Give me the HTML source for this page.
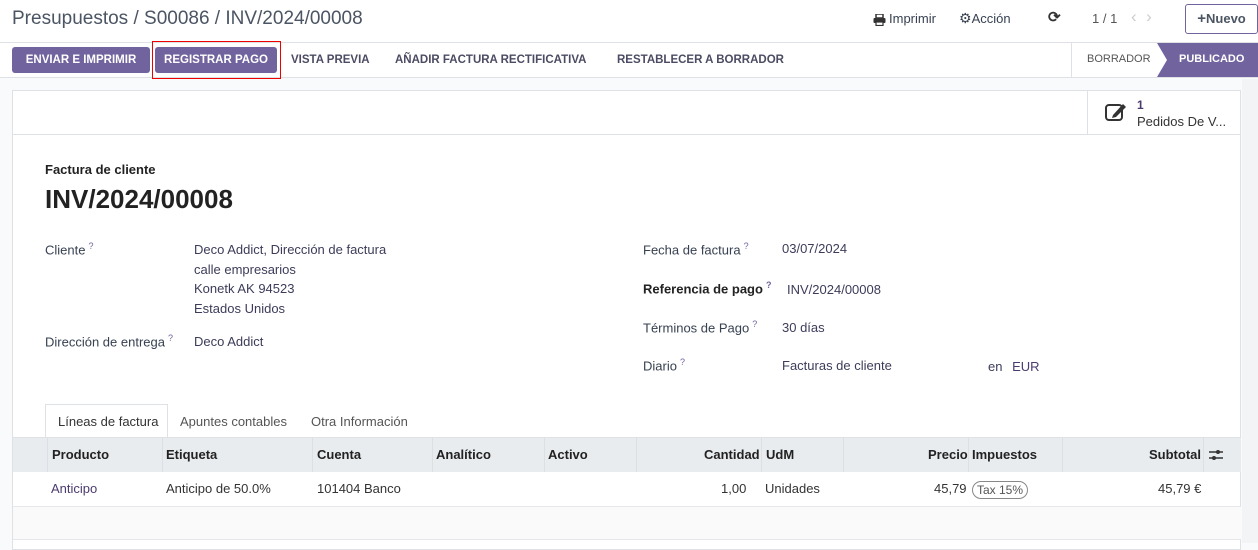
<!DOCTYPE html>
<html><head><meta charset="utf-8"><style>
*{box-sizing:border-box;margin:0;padding:0}
body{width:1258px;height:543px;overflow:hidden;background:#f9fafb;font-family:"Liberation Sans",sans-serif;font-size:13px;color:#374151;position:relative}
.a{position:absolute;white-space:nowrap}
.top{position:absolute;left:0;top:0;width:1258px;height:43px;background:#fff;border-bottom:1px solid #dee2e6}
.bar{position:absolute;left:0;top:43px;width:1258px;height:35px;background:#fff;border-bottom:1px solid #dee2e6}
.btn{position:absolute;top:47px;height:26px;background:#71639e;color:#fff;font-weight:bold;font-size:11.5px;line-height:26px;text-align:center;border-radius:3px}
.lb{position:absolute;top:47px;line-height:26px;font-weight:bold;font-size:11.5px;color:#4b4b63}
.sheet{position:absolute;left:12px;top:90px;width:1229px;height:460px;background:#fff;border:1px solid #dee2e6}
.lbl{color:#374151}
.val{color:#3c3c5a}
sup{font-size:9px;color:#71639e;margin-left:3px}
.th{position:absolute;top:438px;height:34px;line-height:34px;font-weight:bold;color:#222}
.td{position:absolute;top:472px;height:34px;line-height:34px;color:#333}
.sep{position:absolute;top:438px;width:1px;height:34px;background:#dcdfe3}
</style></head><body>
<div class="top"></div>
<div class="a" style="left:12px;top:8px;font-size:19px;color:#4b5563">Presupuestos / S00086 / INV/2024/00008</div>
<svg class="a" style="left:873px;top:14px" width="13" height="12"><rect x="3" y="0" width="7" height="4" fill="none" stroke="#333" stroke-width="1.5"/><rect x="0.5" y="4" width="12" height="5" rx="1" fill="#333"/><rect x="3" y="8" width="7" height="3.5" fill="#fff" stroke="#333" stroke-width="1.2"/></svg>
<div class="a" style="left:889px;top:11px;font-size:13px;color:#374151">Imprimir</div>
<div class="a" style="left:959px;top:10px;font-size:13px;color:#374151"><span style="font-size:14px">⚙</span>Acción</div>
<div class="a" style="left:1048px;top:8px;font-size:15px;font-weight:bold;color:#333">⟳</div>
<div class="a" style="left:1092px;top:11px;color:#555">1 / 1</div>
<div class="a" style="left:1131px;top:7px;color:#ccc;font-size:17px">‹ &nbsp;›</div>
<div class="a" style="left:1185px;top:4px;width:73px;height:30px;border:1px solid #71639e;border-radius:3px;line-height:28px;text-align:center;color:#4b5563;font-size:13px;font-weight:bold"><span style="font-size:15px">+</span>Nuevo</div>
<div class="bar"></div>
<div class="btn" style="left:12px;width:138px">ENVIAR E IMPRIMIR</div>
<div class="btn" style="left:155px;width:122px">REGISTRAR PAGO</div>
<div style="position:absolute;left:152px;top:41px;width:129px;height:38px;border:1px solid #e00"></div>
<div class="lb" style="left:291px">VISTA PREVIA</div>
<div class="lb" style="left:395px">AÑADIR FACTURA RECTIFICATIVA</div>
<div class="lb" style="left:617px">RESTABLECER A BORRADOR</div>
<div style="position:absolute;left:1071px;top:43px;width:1px;height:34px;background:#dee2e6"></div>
<div class="a" style="left:1087px;top:53px;font-size:11px;color:#555">BORRADOR</div>
<svg class="a" style="left:1157px;top:43px" width="101" height="34"><polygon points="0,0 101,0 101,34 0,34 10,17" fill="#71639e"/></svg>
<div class="a" style="left:1179px;top:53px;font-size:11px;color:#fff;font-weight:bold">PUBLICADO</div>
<div class="sheet"></div>
<div style="position:absolute;left:13px;top:134px;width:1228px;height:1px;background:#dee2e6"></div>
<div style="position:absolute;left:1087px;top:91px;width:1px;height:43px;background:#dee2e6"></div>
<svg class="a" style="left:1104px;top:101px" width="24" height="22"><rect x="2" y="4" width="16" height="15" rx="3" fill="none" stroke="#333" stroke-width="2"/><path d="M9 14 L19 3 L22 6 L12 16 L8 17 Z" fill="#333"/></svg>
<div class="a" style="left:1137px;top:98px;color:#4b3b6e;font-size:12px;font-weight:bold">1</div>
<div class="a" style="left:1137px;top:114px;color:#333">Pedidos De V...</div>
<div class="a" style="left:45px;top:162px;font-weight:bold;color:#222">Factura de cliente</div>
<div class="a" style="left:45px;top:184px;font-size:26px;font-weight:bold;color:#222">INV/2024/00008</div>
<div class="a lbl" style="left:45px;top:241px">Cliente<sup>?</sup></div>
<div class="a val" style="left:194px;top:240px;line-height:19.5px">Deco Addict, Dirección de factura<br>calle empresarios<br>Konetk AK 94523<br>Estados Unidos</div>
<div class="a lbl" style="left:45px;top:333px">Dirección de entrega<sup>?</sup></div>
<div class="a val" style="left:194px;top:334px">Deco Addict</div>
<div class="a lbl" style="left:643px;top:241px">Fecha de factura<sup>?</sup></div>
<div class="a val" style="left:782px;top:241px">03/07/2024</div>
<div class="a" style="left:643px;top:280px;font-weight:bold;color:#222">Referencia de pago<sup>?</sup></div>
<div class="a val" style="left:787px;top:282px">INV/2024/00008</div>
<div class="a lbl" style="left:643px;top:319px">Términos de Pago<sup>?</sup></div>
<div class="a val" style="left:782px;top:320px">30 días</div>
<div class="a lbl" style="left:643px;top:357px">Diario<sup>?</sup></div>
<div class="a val" style="left:782px;top:358px">Facturas de cliente</div>
<div class="a val" style="left:988px;top:359px">en <span style="color:#4b3b6e;margin-left:6px">EUR</span></div>
<div style="position:absolute;left:45px;top:404px;width:123px;height:35px;background:#fff;border:1px solid #dee2e6;border-bottom:none"></div>
<div style="position:absolute;left:13px;top:437px;width:1228px;height:1px;background:#dee2e6"></div>
<div class="a" style="left:58px;top:414px;color:#333">Líneas de factura</div>
<div class="a" style="left:180px;top:414px;color:#555">Apuntes contables</div>
<div class="a" style="left:311px;top:414px;color:#555">Otra Información</div>
<div style="position:absolute;left:13px;top:438px;width:1228px;height:34px;background:#e9ecef"></div>
<div class="sep" style="left:47px"></div><div class="sep" style="left:162px"></div><div class="sep" style="left:312px"></div><div class="sep" style="left:432px"></div><div class="sep" style="left:544px"></div><div class="sep" style="left:636px"></div><div class="sep" style="left:761px"></div><div class="sep" style="left:843px"></div><div class="sep" style="left:968px"></div><div class="sep" style="left:1062px"></div><div class="sep" style="left:1203px"></div>
<div class="th" style="left:52px">Producto</div>
<div class="th" style="left:166px">Etiqueta</div>
<div class="th" style="left:317px">Cuenta</div>
<div class="th" style="left:436px">Analítico</div>
<div class="th" style="left:548px">Activo</div>
<div class="th" style="left:704px">Cantidad</div>
<div class="th" style="left:766px">UdM</div>
<div class="th" style="left:928px">Precio</div>
<div class="th" style="left:972px">Impuestos</div>
<div class="th" style="left:1149px">Subtotal</div>
<svg class="a" style="left:1209px;top:449px" width="14" height="12"><path d="M0 3H14M0 9H14" stroke="#333" stroke-width="1.5"/><circle cx="9" cy="3" r="2" fill="#333"/><circle cx="5" cy="9" r="2" fill="#333"/></svg>
<div class="td" style="left:51px;color:#4b3b6e">Anticipo</div>
<div class="td" style="left:166px">Anticipo de 50.0%</div>
<div class="td" style="left:317px">101404 Banco</div>
<div class="td" style="left:721px">1,00</div>
<div class="td" style="left:765px">Unidades</div>
<div class="td" style="left:934px">45,79</div>
<div class="a" style="left:972px;top:481px;height:18px;line-height:16px;padding:0 4px;border:1px solid #888;border-radius:9px;font-size:12px;color:#555">Tax 15%</div>
<div class="td" style="left:1158px">45,79 €</div>
<div style="position:absolute;left:13px;top:506px;width:1228px;height:1px;background:#e5e7eb"></div>
<div style="position:absolute;left:13px;top:507px;width:1228px;height:32px;background:#fafafa"></div>
<div style="position:absolute;left:13px;top:539px;width:1228px;height:1px;background:#e5e7eb"></div>
<div style="position:absolute;left:1242px;top:79px;width:16px;height:464px;background:#f3f4f6"></div>
</body></html>
